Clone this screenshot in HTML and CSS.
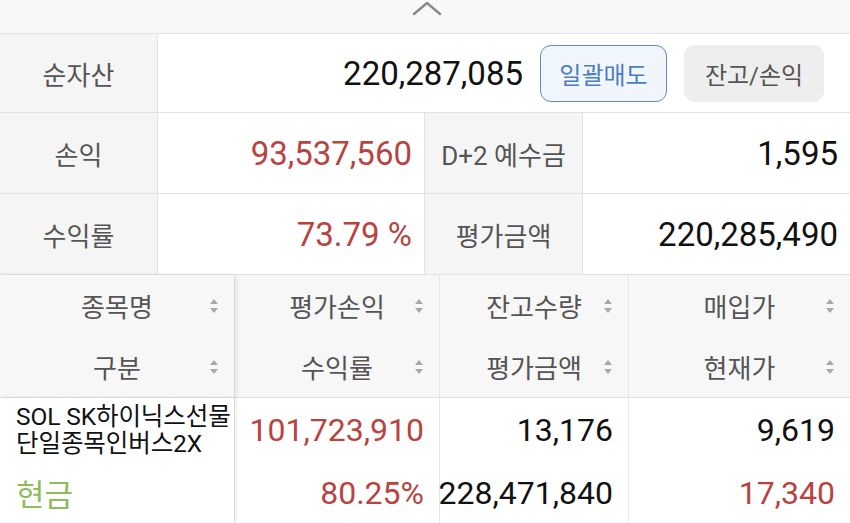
FILE: index.html
```html
<!DOCTYPE html>
<html lang="ko">
<head>
    <meta charset="UTF-8">
    <meta name="viewport" content="width=device-width, initial-scale=1.0">
    <title>잔고</title>
    <link rel="stylesheet" href="styles.css">
</head>
<body>

<div class="collapse-bar">
    <svg class="chevron" width="30" height="16" viewBox="0 0 30 16">
        <path d="M2 14 L15 3 L28 14" fill="none" stroke="#8a8a8a" stroke-width="2.4" stroke-linecap="round" stroke-linejoin="round"/>
    </svg>
</div>

<div class="summary">
    <div class="label">순자산</div>
    <div class="value wide">
        <span class="num">220,287,085</span>
        <button class="btn btn-sell">일괄매도</button>
        <button class="btn btn-plain">잔고/손익</button>
    </div>

    <div class="label">손익</div>
    <div class="value red">93,537,560</div>
    <div class="label">D+2 예수금</div>
    <div class="value">1,595</div>

    <div class="label">수익률</div>
    <div class="value red">73.79 %</div>
    <div class="label">평가금액</div>
    <div class="value">220,285,490</div>
</div>

<div class="holdings">
    <div class="head">
        <div class="col first">
            <div class="hcell">종목명<i class="sort"></i></div>
            <div class="hcell">구분<i class="sort"></i></div>
        </div>
        <div class="col">
            <div class="hcell">평가손익<i class="sort"></i></div>
            <div class="hcell">수익률<i class="sort"></i></div>
        </div>
        <div class="col">
            <div class="hcell">잔고수량<i class="sort"></i></div>
            <div class="hcell">평가금액<i class="sort"></i></div>
        </div>
        <div class="col">
            <div class="hcell">매입가<i class="sort"></i></div>
            <div class="hcell">현재가<i class="sort"></i></div>
        </div>
    </div>

    <div class="body">
        <div class="col first">
            <div class="dcell name">SOL SK하이닉스선물<br>단일종목인버스2X</div>
            <div class="dcell kind">현금</div>
        </div>
        <div class="col">
            <div class="dcell num red">101,723,910</div>
            <div class="dcell num red">80.25%</div>
        </div>
        <div class="col">
            <div class="dcell num">13,176</div>
            <div class="dcell num">228,471,840</div>
        </div>
        <div class="col">
            <div class="dcell num">9,619</div>
            <div class="dcell num red">17,340</div>
        </div>
    </div>
</div>

</body>
</html>
```

FILE: styles.css
```css
/* 기본 */
body {
    margin: 0;
    background-color: #ffffff;
    font-family: Roboto, "Noto Sans CJK KR", sans-serif;
    color: #111111;
    width: 850px;
    overflow: hidden;
}

.red {
    color: #b8433f;
}

/* 상단 접기 바 */
.collapse-bar {
    height: 33px;
    background-color: #f8f8f8;
    border-bottom: 1px solid #e2e2e2;
    display: flex;
    justify-content: center;
}

.chevron {
    margin-left: 4px;
}

/* 요약 표 */
.summary {
    display: grid;
    grid-template-columns: 157px 266px 157px 1fr;
    grid-template-rows: 78px 80px 80px;
    gap: 1px;
    background-color: #e2e2e2;
    border-bottom: 1px solid #e2e2e2;
}

.summary .label {
    background-color: #f5f5f5;
    color: #555555;
    font-size: 26px;
    display: flex;
    align-items: center;
    justify-content: center;
}

.summary .value {
    background-color: #ffffff;
    font-size: 33px;
    display: flex;
    align-items: center;
    justify-content: flex-end;
    padding-right: 12px;
}

.summary .value.wide {
    grid-column: 2 / 5;
    padding-right: 26px;
    color: #111111;
}

.btn {
    font-family: Roboto, "Noto Sans CJK KR", sans-serif;
    font-size: 24px;
    height: 57px;
    border-radius: 11px;
    margin-left: 17px;
    padding: 0;
    cursor: pointer;
}

.btn-sell {
    width: 127px;
    background-color: #f1f6fd;
    border: 1.5px solid #5f8dc8;
    color: #4b7ec2;
}

.btn-plain {
    width: 140px;
    background-color: #eeeeee;
    border: none;
    color: #555555;
}

/* 보유 종목 표 */
.head, .body {
    display: grid;
    grid-template-columns: 234px 204px 188px 1fr;
    column-gap: 1px;
    background-color: #e6e6e6;
}

.head {
    border-bottom: 1px solid #e2e2e2;
}

.col {
    display: flex;
    flex-direction: column;
}

.head .col {
    background-color: #f7f7f7;
}

.body .col {
    background-color: #ffffff;
}

.col.first {
    position: relative;
    z-index: 1;
    box-shadow: 3px 0 5px rgba(0, 0, 0, 0.07);
}

.hcell {
    position: relative;
    height: 61px;
    display: flex;
    align-items: center;
    justify-content: center;
    font-size: 26px;
    color: #555555;
}

/* 정렬 아이콘 */
.sort {
    position: absolute;
    right: 16px;
    top: 24px;
    width: 8px;
    height: 14px;
}

.sort::before, .sort::after {
    content: "";
    position: absolute;
    left: 0;
    border-left: 4px solid transparent;
    border-right: 4px solid transparent;
}

.sort::before {
    top: 0;
    border-bottom: 5px solid #a8a8a8;
}

.sort::after {
    bottom: 0;
    border-top: 5px solid #a8a8a8;
}

.dcell {
    height: 63px;
    display: flex;
    align-items: center;
}

.dcell.num {
    justify-content: flex-end;
    padding-right: 15px;
    font-size: 32px;
}

.dcell.name {
    font-size: 24.5px;
    line-height: 27px;
    padding-left: 16px;
    letter-spacing: -0.1px;
    white-space: nowrap;
}

.dcell.kind {
    font-size: 31px;
    color: #8dbd5b;
    padding-left: 16px;
}
```
